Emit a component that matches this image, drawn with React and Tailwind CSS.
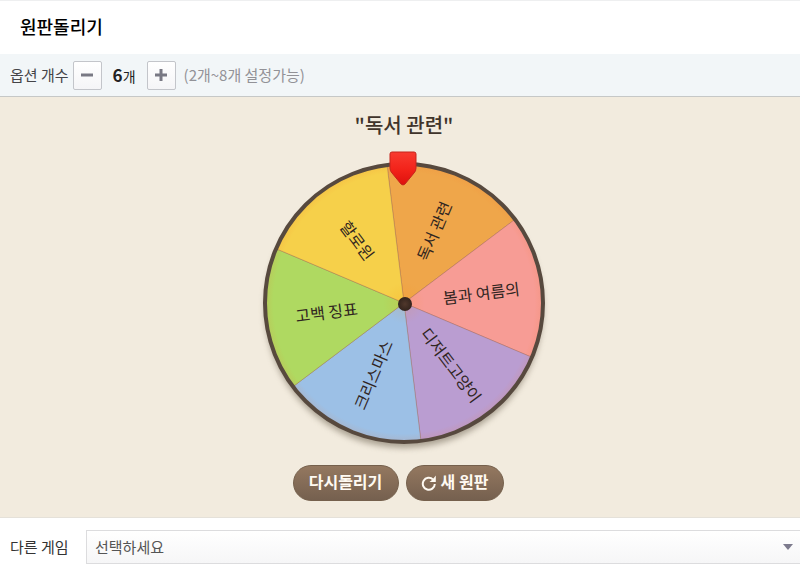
import { useState } from "react";

const SEGMENTS = [
  { label: "독서 관련", color: "#efa64a", angle: 23, turn: -67 },
  { label: "봄과 여름의", color: "#f79c95", angle: 83, turn: -7 },
  { label: "디저트고양이", color: "#ba9dd1", angle: 143, turn: 53 },
  { label: "크리스마스", color: "#9cc0e6", angle: 203, turn: -67 },
  { label: "고백 징표", color: "#afd961", angle: 263, turn: -7 },
  { label: "할로윈", color: "#f6d04a", angle: 323, turn: 53 },
];

const CENTER = 150;
const RADIUS = 139;

function point(angle, radius) {
  const rad = (angle * Math.PI) / 180;
  return [CENTER + radius * Math.sin(rad), CENTER - radius * Math.cos(rad)];
}

function slicePath(angle) {
  const [x1, y1] = point(angle - 30, RADIUS);
  const [x2, y2] = point(angle + 30, RADIUS);
  return `M${CENTER} ${CENTER}L${x1} ${y1}A${RADIUS} ${RADIUS} 0 0 1 ${x2} ${y2}Z`;
}

function Wheel() {
  return (
    <svg viewBox="0 0 300 308" className="block h-[308px] w-[300px] overflow-visible" role="img" aria-label="원판">
      <defs>
        <radialGradient id="rim" gradientUnits="userSpaceOnUse" cx="150" cy="150" r="139">
          <stop offset="0" stopColor="#ff8a00" stopOpacity="0.15" />
          <stop offset="0.15" stopColor="#ff8a00" stopOpacity="0" />
          <stop offset="0.94" stopColor="#ff7a20" stopOpacity="0" />
          <stop offset="1" stopColor="#e07040" stopOpacity="0.14" />
        </radialGradient>
        <linearGradient id="pin" x1="0" y1="0" x2="0" y2="1">
          <stop offset="0" stopColor="#f83b30" />
          <stop offset="0.55" stopColor="#f22219" />
          <stop offset="1" stopColor="#dd100d" />
        </linearGradient>
        <radialGradient id="hub">
          <stop offset="0" stopColor="#51382c" />
          <stop offset="1" stopColor="#33241d" />
        </radialGradient>
        <filter id="shade" x="-10%" y="-10%" width="120%" height="120%">
          <feGaussianBlur stdDeviation="3" />
        </filter>
      </defs>
      <circle cx="150" cy="156" r="139" fill="#79705f" opacity="0.6" filter="url(#shade)" />
      {SEGMENTS.map((s) => (
        <path key={s.label} d={slicePath(s.angle)} fill={s.color} stroke="#a06050" strokeOpacity="0.35" strokeWidth="1" />
      ))}
      <circle cx="150" cy="150" r="139" fill="url(#rim)" />
      <circle cx="150" cy="150" r="139" fill="none" stroke="#57493e" strokeWidth="4" />
      {SEGMENTS.map((s) => {
        const [x, y] = point(s.angle, 78);
        return (
          <text
            key={s.label}
            transform={`translate(${x} ${y}) rotate(${s.turn})`}
            textAnchor="middle"
            dy="6"
            fontSize="16"
            fill="#30251f"
          >
            {s.label}
          </text>
        );
      })}
      <circle cx="151" cy="151" r="7" fill="url(#hub)" />
      <path
        d="M138 -1H160Q162 -1 162 1V15Q162 18 160 20L151 31Q149 33 147 31L138 20Q136 18 136 15V1Q136 -1 138 -1Z"
        fill="url(#pin)"
        stroke="#c5241c"
        strokeWidth="1"
      />
    </svg>
  );
}

function StepButton({ label, plus, onClick }) {
  return (
    <button
      type="button"
      aria-label={label}
      onClick={onClick}
      className="flex size-[29px] items-center justify-center rounded-[2px] border border-[#c3c5ca] bg-gradient-to-b from-white to-[#f5f5f7] text-[#797984]"
    >
      <svg viewBox="0 0 12 12" className="size-3" aria-hidden="true">
        <path d={plus ? "M0 6H12M6 0V12" : "M0 6H12"} stroke="currentColor" strokeWidth="3" />
      </svg>
    </button>
  );
}

const PILL =
  "flex h-9 items-center justify-center rounded-full border border-[#75604c] bg-gradient-to-b from-[#947860] to-[#75604f] pb-1 text-base font-bold text-[#fffaf2]";

export default function App() {
  const [count, setCount] = useState(6);
  return (
    <div className="min-h-screen bg-white font-['Noto_Sans_CJK_KR',sans-serif]">
      <header className="flex h-[54px] items-center border-t border-[#eeeff0] px-5 pb-1">
        <h1 className="text-lg font-medium text-black">원판돌리기</h1>
      </header>
      <div className="flex h-[43px] items-center border-b border-[#c6c8c7] bg-[#f2f6f8] px-[10px] text-[15px] text-[#444448]">
        <span className="mr-1">옵션 개수</span>
        <StepButton label="옵션 줄이기" onClick={() => setCount(Math.max(2, count - 1))} />
        <output className="w-[45px] text-center text-sm text-[#222]">
          <b className="text-[17px]">{count}</b>개
        </output>
        <StepButton label="옵션 늘리기" plus onClick={() => setCount(Math.min(8, count + 1))} />
        <span className="ml-2 text-[#929297]">(2개~8개 설정가능)</span>
      </div>
      <main className="flex h-[421px] flex-col items-center border-b border-[#e5e1d9] bg-[#f2ebde] pt-3 pl-2">
        <h2 className="text-xl leading-8 font-medium text-[#40342b]">"독서 관련"</h2>
        <div className="mt-3">
          <Wheel />
        </div>
        <div className="mt-1 mr-3 flex gap-[7px]">
          <button type="button" className={`${PILL} w-[106px]`}>
            다시돌리기
          </button>
          <button type="button" className={`${PILL} w-[98px] gap-1`}>
            <svg viewBox="0 0 16 16" className="mt-1 size-4" fill="none" aria-hidden="true">
              <path d="M13.8 9A6 6 0 1 1 12 4.5" stroke="currentColor" strokeWidth="2" />
              <path d="M14.8 0.5V7H8.5L11.6 4.6Z" fill="currentColor" />
            </svg>
            새 원판
          </button>
        </div>
      </main>
      <footer className="flex items-center pt-3 pl-[10px]">
        <label htmlFor="game" className="w-[76px] shrink-0 text-[15px] text-[#333]">
          다른 게임
        </label>
        <div className="relative flex-1">
          <select
            id="game"
            className="h-[34px] w-full appearance-none border border-r-0 border-[#dcdcde] bg-gradient-to-b from-white to-[#f6f6f7] pl-2 text-[15px] text-[#555]"
          >
            <option>선택하세요</option>
          </select>
          <svg viewBox="0 0 10 6" className="pointer-events-none absolute top-[14px] right-[7px] h-[6px] w-[10px]" aria-hidden="true">
            <path d="M0 0H10L5 6Z" fill="#7d7b8d" />
          </svg>
        </div>
      </footer>
    </div>
  );
}
